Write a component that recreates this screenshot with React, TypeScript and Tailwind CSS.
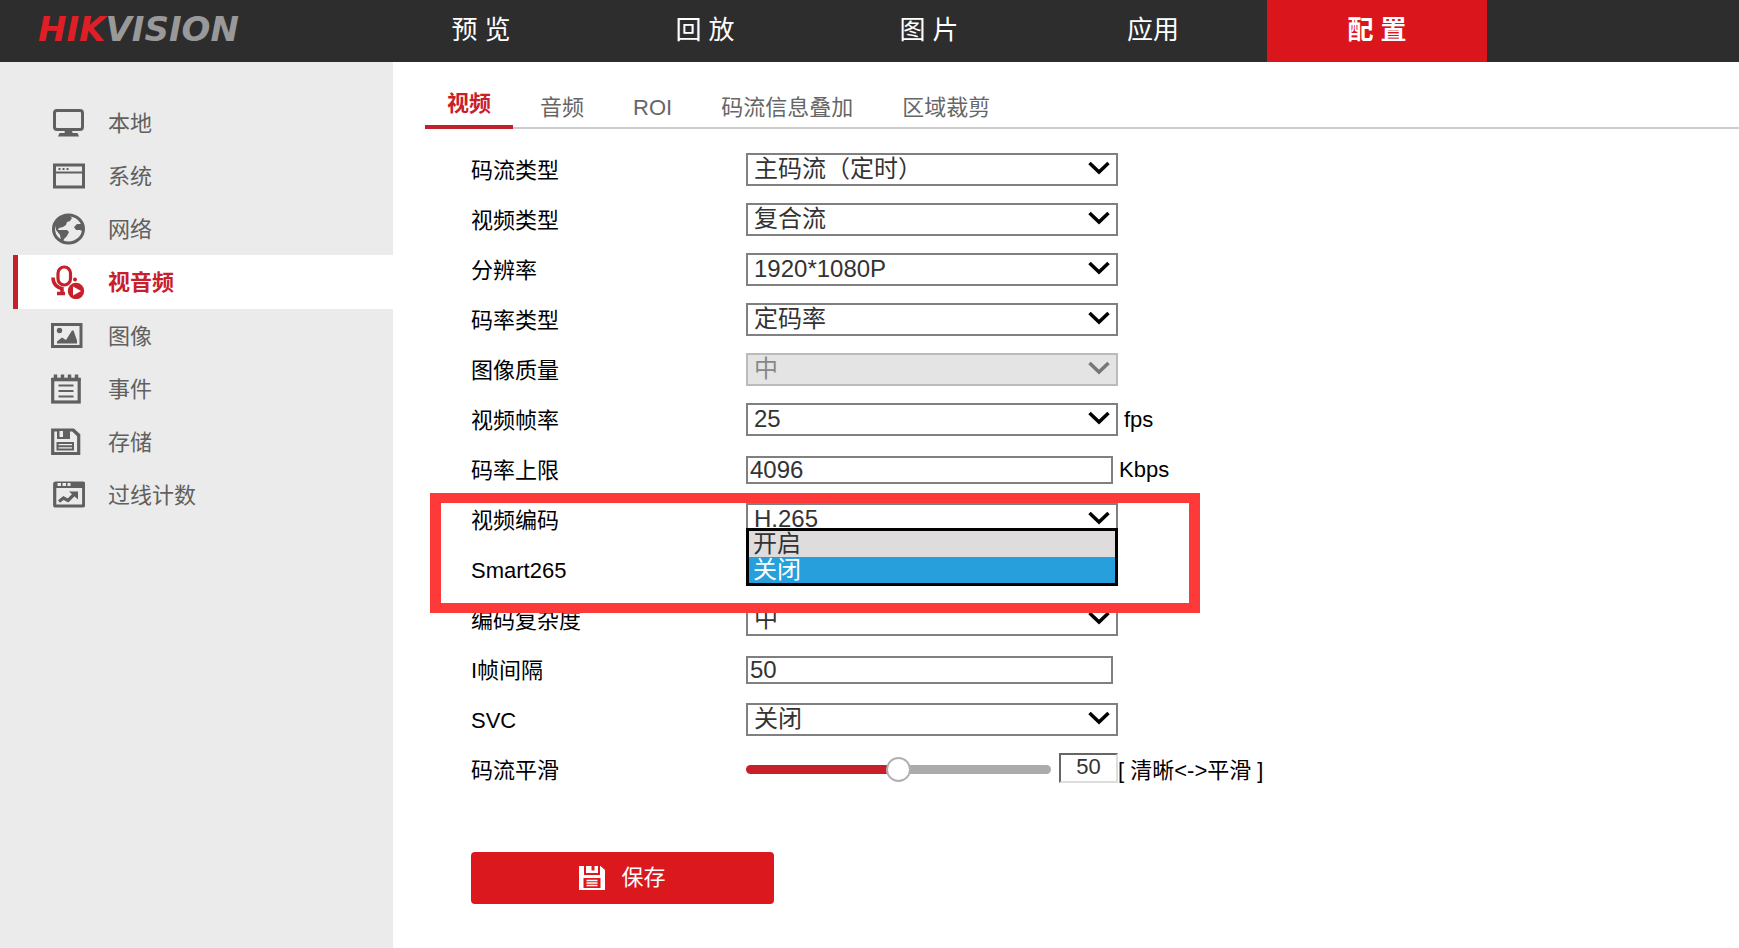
import { useState, type ReactNode } from "react";

const NAV = ["预 览", "回 放", "图 片", "应用", "配 置"];
const TABS = ["视频", "音频", "ROI", "码流信息叠加", "区域裁剪"];

function MonitorIcon() {
  return (
    <svg viewBox="0 0 34 34" className="size-[34px]" fill="none" aria-hidden="true">
      <rect x="3.5" y="4.5" width="28" height="19" rx="2.5" stroke="currentColor" strokeWidth="3" />
      <path d="M14 24h7l.5 3h5l1.500 3.500h-21l1.500-3.500h5z" fill="currentColor" />
    </svg>
  );
}

function WindowIcon() {
  return (
    <svg viewBox="0 0 34 34" className="size-[34px]" fill="none" aria-hidden="true">
      <rect x="3.500" y="6" width="29" height="22" stroke="currentColor" strokeWidth="3" />
      <path d="M4 13.500h28" stroke="currentColor" strokeWidth="2" />
      <path d="M7.500 10h10" stroke="currentColor" strokeWidth="2" strokeDasharray="2 2" />
    </svg>
  );
}

function GlobeIcon() {
  return (
    <svg viewBox="0 0 34 34" className="size-[34px]" fill="none" aria-hidden="true">
      <ellipse cx="17.500" cy="17" rx="15" ry="14" stroke="currentColor" strokeWidth="3" />
      <path
        d="M4 13l5-8 9-2 3 3-2 3-3 1-1 3-3 2-4 1-1 2 9 0 2 2-2 4-3 3-1 3-2-1-1-6-4-5zM31 12l-5 0-3 3 2 3 4 0 2 1z"
        fill="currentColor"
      />
    </svg>
  );
}

function MicIcon() {
  return (
    <svg viewBox="0 0 34 34" className="size-[34px]" fill="none" aria-hidden="true">
      <rect x="7" y="2" width="12.500" height="18" rx="6.200" stroke="currentColor" strokeWidth="3.200" />
      <path d="M2 12.500c0 6.500 3 10 10.500 11.500" stroke="currentColor" strokeWidth="3.500" />
      <path d="M6 28.500h8M11 24v4" stroke="currentColor" strokeWidth="3.500" />
      <circle cx="24" cy="14.500" r="2" fill="currentColor" />
      <circle cx="25" cy="26" r="8.200" fill="currentColor" />
      <path d="M22 21.500l8 4.500-8 4.500z" fill="#fff" />
    </svg>
  );
}

function PictureIcon() {
  return (
    <svg viewBox="0 0 34 34" className="size-[34px]" fill="none" aria-hidden="true">
      <rect x="1.500" y="5.500" width="28.500" height="22" stroke="currentColor" strokeWidth="3" />
      <circle cx="8.500" cy="11.500" r="2.700" fill="currentColor" />
      <path d="M6 24.500v-2l5-4 4 2.500 6-9.500h1.500l3.500 10v3z" fill="currentColor" />
    </svg>
  );
}

function EventIcon() {
  return (
    <svg viewBox="0 0 34 34" className="size-[34px]" fill="none" aria-hidden="true">
      <rect x="1.700" y="7.500" width="26.500" height="22.500" stroke="currentColor" strokeWidth="3.200" />
      <path d="M.5 7.500h29" stroke="currentColor" strokeWidth="3.500" />
      <path d="M4.500 2.500v5M11.500 2.500v5M18.500 2.500v5M25.500 2.500v5" stroke="currentColor" strokeWidth="3.500" />
      <path d="M7.500 13.500h15M7.500 19h15M7.500 24.500h15" stroke="currentColor" strokeWidth="2" />
    </svg>
  );
}

function StorageIcon() {
  return (
    <svg viewBox="0 0 34 34" className="size-[34px]" fill="none" aria-hidden="true">
      <path d="M1.700 5h20.500l5.500 5v18.500h-26z" stroke="currentColor" strokeWidth="3.200" />
      <path d="M6 4h13v10h-13zM19 4h4l5 5v4z" fill="currentColor" />
      <path d="M8.500 6h3.500v6h-3.500z" fill="#ebebeb" />
      <path d="M6.500 18h15.500v6.500h-15.500zM6.500 21.200h15.500" stroke="currentColor" strokeWidth="2" />
    </svg>
  );
}

function CountIcon() {
  return (
    <svg viewBox="0 0 34 34" className="size-[34px]" fill="none" aria-hidden="true">
      <rect x="3.700" y="5" width="29" height="23" rx="1" stroke="currentColor" strokeWidth="3.200" />
      <path d="M3 4h30v6h-30z" fill="currentColor" />
      <path d="M6.500 6.500h13" stroke="#ebebeb" strokeWidth="3" strokeDasharray="3.500 1.500" />
      <path d="M8 23.500l4.500-3.500 4.500 2.500 6-6" stroke="currentColor" strokeWidth="3.200" />
      <path d="M18 13.500h9v8z" fill="currentColor" />
    </svg>
  );
}

function SaveIcon() {
  return (
    <svg viewBox="0 0 26 24" className="h-6 w-[26px]" fill="none" aria-hidden="true">
      <path d="M0 0h21.500l4.500 4v20h-26z" fill="currentColor" />
      <path d="M5 0h2v7h12v-7h2v9h-16z" fill="#da181e" />
      <path d="M12.500 0h3v4.500h-3z" fill="#da181e" />
      <path d="M4.500 12h17v10h-17z" fill="#da181e" />
      <path d="M7.500 14.500h11M7.500 17h11M7.500 19.500h11" stroke="currentColor" strokeWidth="1.500" />
    </svg>
  );
}

const MENU = [
  { label: "本地", icon: <MonitorIcon /> },
  { label: "系统", icon: <WindowIcon /> },
  { label: "网络", icon: <GlobeIcon /> },
  { label: "视音频", icon: <MicIcon /> },
  { label: "图像", icon: <PictureIcon /> },
  { label: "事件", icon: <EventIcon /> },
  { label: "存储", icon: <StorageIcon /> },
  { label: "过线计数", icon: <CountIcon /> },
];

function Row({ id, label, children }: { id: string; label: string; children: ReactNode }) {
  return (
    <div className="flex h-[50px] items-center">
      <label htmlFor={id} className="w-[275px] shrink-0 pt-0.5">
        {label}
      </label>
      {children}
    </div>
  );
}

function Select({ id, options, disabled = false }: { id: string; options: string[]; disabled?: boolean }) {
  return (
    <div className="relative mb-0.5">
      <select
        id={id}
        disabled={disabled}
        className="block h-[33px] w-[372px] appearance-none border-2 border-[#808080] bg-white pb-1 pl-1.5 pr-10 text-2xl leading-7 text-[#333] disabled:border-[#bbb] disabled:bg-[#e4e4e4] disabled:text-[#888] disabled:opacity-100"
      >
        {options.map((o) => (
          <option key={o}>{o}</option>
        ))}
      </select>
      <svg
        viewBox="0 0 22 14"
        className={`pointer-events-none absolute right-2 top-2 h-3.5 w-[22px] ${disabled ? "text-[#777]" : "text-black"}`}
        fill="none"
        aria-hidden="true"
      >
        <path d="M1.500 2l9.500 9 9.500-9" stroke="currentColor" strokeWidth="3.500" />
      </svg>
    </div>
  );
}

function NumberBox({ id, value }: { id: string; value: string }) {
  return (
    <input
      id={id}
      type="text"
      defaultValue={value}
      className="h-7 w-[367px] border-2 border-[#808080] bg-white pl-0.5 text-2xl leading-6 text-[#333]"
    />
  );
}

export default function App() {
  const [active, setActive] = useState("视音频");
  const [tab, setTab] = useState("视频");
  const [smart, setSmart] = useState("关闭");
  const [smooth, setSmooth] = useState(50);

  return (
    <div className="flex min-h-screen flex-col bg-white font-['Liberation_Sans','Noto_Sans_CJK_SC',sans-serif] text-[22px] leading-7 text-black">
      {/* HEADER */}
      <header className="flex h-[62px] shrink-0 bg-[#2d2d2d]">
        <a
          href="#"
          className="flex w-[371px] shrink-0 items-center pb-1 pl-[38px] font-['DejaVu_Sans',sans-serif] text-[34px] font-bold italic leading-none text-[#999]"
        >
          <span className="text-[#e01e26]">HIK</span>VISION
        </a>
        <nav className="flex gap-1">
          {NAV.map((item, i) => (
            <a
              key={item}
              href="#"
              className={`flex w-[220px] items-center justify-center pb-0.5 text-[26px] leading-8 text-white ${
                i === 4 ? "bg-[#da161c] font-bold" : ""
              }`}
            >
              {item}
            </a>
          ))}
        </nav>
      </header>

      <div className="flex grow">
        {/* SIDEBAR */}
        <aside className="w-[393px] shrink-0 bg-[#ebebeb] pl-[13px] pt-[34px]">
          {MENU.map((m) => (
            <button
              key={m.label}
              type="button"
              onClick={() => setActive(m.label)}
              className={`flex w-full items-center gap-[23px] border-l-[5px] pl-[33px] text-left ${
                active === m.label
                  ? "h-[54px] border-[#c8202b] bg-white font-bold text-[#c8202b]"
                  : "h-[53px] border-transparent text-[#606060]"
              }`}
            >
              {m.icon}
              <span className="pt-0.5">{m.label}</span>
            </button>
          ))}
        </aside>

        <main className="grow pl-8">
          {/* TABS */}
          <div className="flex h-[67px] items-end gap-[5px] border-b-2 border-[#ccc]">
            {TABS.map((t) => (
              <button
                key={t}
                type="button"
                onClick={() => setTab(t)}
                className={`-mb-0.5 border-b-4 px-[22px] ${
                  tab === t
                    ? "border-[#c0202a] pb-[7px] font-bold text-[#c8202b]"
                    : "border-transparent pb-[3px] text-[#666]"
                }`}
              >
                {t}
              </button>
            ))}
          </div>

          {/* FORM */}
          <form className="pb-8 pl-[46px] pt-4" onSubmit={(e) => e.preventDefault()}>
            <div className="relative">
              <Row id="stream" label="码流类型">
                <Select id="stream" options={["主码流（定时）", "子码流"]} />
              </Row>
              <Row id="video" label="视频类型">
                <Select id="video" options={["复合流", "视频流"]} />
              </Row>
              <Row id="resolution" label="分辨率">
                <Select id="resolution" options={["1920*1080P", "1280*720P"]} />
              </Row>
              <Row id="rate-type" label="码率类型">
                <Select id="rate-type" options={["定码率", "变码率"]} />
              </Row>
              <Row id="quality" label="图像质量">
                <Select id="quality" options={["中"]} disabled />
              </Row>
              <Row id="fps" label="视频帧率">
                <Select id="fps" options={["25", "20", "15"]} />
                <span className="pl-1.5">fps</span>
              </Row>
              <Row id="bitrate" label="码率上限">
                <NumberBox id="bitrate" value="4096" />
                <span className="pl-1.5">Kbps</span>
              </Row>
              <Row id="codec" label="视频编码">
                <Select id="codec" options={["H.265", "H.264"]} />
              </Row>
              <Row id="smart" label="Smart265">
                <div role="listbox" aria-label="Smart265" className="relative mb-0.5 h-[33px] w-[372px]">
                  {/* open list, drawn upwards over the row above */}
                  <div className="absolute inset-x-0 bottom-0 z-10 border-[3px] border-black bg-[#dedcdd]">
                    {["开启", "关闭"].map((o) => (
                      <button
                        key={o}
                        id={smart === o ? "smart" : undefined}
                        type="button"
                        role="option"
                        aria-selected={smart === o}
                        onClick={() => setSmart(o)}
                        className={`block h-[26px] w-full pl-1 text-left text-2xl leading-6 ${
                          smart === o ? "bg-[#269fdc] text-white" : "text-[#333]"
                        }`}
                      >
                        {o}
                      </button>
                    ))}
                  </div>
                </div>
              </Row>
              <Row id="complexity" label="编码复杂度">
                <Select id="complexity" options={["中", "低", "高"]} />
              </Row>
              <Row id="interval" label="I帧间隔">
                <NumberBox id="interval" value="50" />
              </Row>
              <Row id="svc" label="SVC">
                <Select id="svc" options={["关闭", "开启"]} />
              </Row>
              <Row id="smooth" label="码流平滑">
                <input
                  id="smooth"
                  type="range"
                  min={0}
                  max={100}
                  value={smooth}
                  onChange={(e) => setSmooth(Number(e.target.value))}
                  style={{
                    background: `linear-gradient(to right, #c8202b ${smooth}%, #ababab ${smooth}%)`,
                  }}
                  className="mb-0.5 h-[9px] w-[305px] appearance-none rounded-full [&::-webkit-slider-thumb]:size-[25px] [&::-webkit-slider-thumb]:appearance-none [&::-webkit-slider-thumb]:rounded-full [&::-webkit-slider-thumb]:border-2 [&::-webkit-slider-thumb]:border-[#b0b0b0] [&::-webkit-slider-thumb]:bg-white"
                />
                <input
                  type="text"
                  aria-label="码流平滑"
                  value={smooth}
                  onChange={(e) => setSmooth(Number(e.target.value) || 0)}
                  className="mb-1 ml-2 h-[30px] w-[59px] border-2 border-b-[#ddd] border-l-[#666] border-r-[#ddd] border-t-[#666] bg-white pb-0.5 text-center leading-6 text-[#333]"
                />
                <span className="pt-0.5">[ 清晰&lt;-&gt;平滑 ]</span>
              </Row>

              {/* highlight frame around the codec rows */}
              <div className="pointer-events-none absolute -left-[41px] top-[348px] h-[120px] w-[770px] border-x-11 border-y-10 border-[#fd3a39]" />
            </div>

            <button
              type="submit"
              className="mt-[57px] flex h-[52px] w-[303px] items-center justify-center gap-4 rounded bg-[#da181e] text-white"
            >
              <SaveIcon />
              保存
            </button>
          </form>
        </main>
      </div>
    </div>
  );
}
